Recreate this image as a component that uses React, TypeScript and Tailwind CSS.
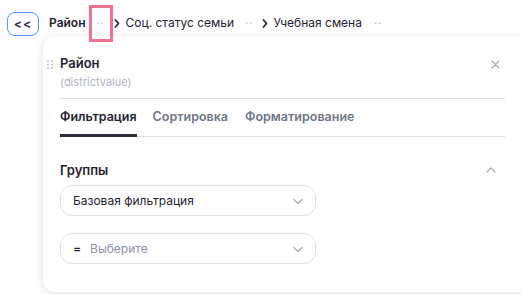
import React from "react";

const Dots = () => (
	<span className="text-[11px] leading-none tracking-[1px] text-[#b3b8c7]">··</span>
);

const Chevron = ({ up = false }: { up?: boolean }) => (
	<svg
		width="12"
		height="12"
		viewBox="0 0 12 12"
		fill="none"
		stroke="#a5abbb"
		strokeWidth="1.2"
		strokeLinecap="round"
		strokeLinejoin="round"
	>
		<path d={up ? "M2 8L6 4L10 8" : "M2 4.5L6 8.5L10 4.5"} />
	</svg>
);

const Arrow = () => (
	<svg width="6" height="9" viewBox="0 0 6 9" fill="none" stroke="#2a2e3a" strokeWidth="1.8" strokeLinecap="round" strokeLinejoin="round">
		<path d="M1.5 1L4.5 4.5L1.5 8" />
	</svg>
);

const App = () => {
	return (
		<div
			className="relative w-[521px] h-[294px] overflow-hidden bg-white text-[#1f2330]"
			style={{ fontFamily: "Inter, 'Noto Sans', sans-serif" }}
		>
			{/* Breadcrumbs */}
			<div className="relative z-10 flex items-center h-[46px] pl-[7px] text-[12px]">
				<button className="flex items-center justify-center w-[32px] h-[24px] mt-[1px] rounded-lg border border-[#5b90ee] text-[12px] font-bold tracking-[1px] text-[#2a2e3a]">
					&lt;&lt;
				</button>
				<span className="ml-[10px] font-semibold">Район</span>
				<span className="ml-[3px] flex items-center justify-center w-[24px] h-[37px] border-[3px] border-[#f0708f]">
					<Dots />
				</span>
				<span className="ml-[1px]">
					<Arrow />
				</span>
				<span className="ml-[6px]">Соц. статус семьи</span>
				<span className="ml-[11px]">
					<Dots />
				</span>
				<span className="ml-[9px]">
					<Arrow />
				</span>
				<span className="ml-[5px]">Учебная смена</span>
				<span className="ml-[12px]">
					<Dots />
				</span>
			</div>

			{/* Popover */}
			<div className="absolute left-[43px] top-[36px] w-[490px] h-[256px] rounded-xl bg-white shadow-[0_2px_10px_rgba(30,40,70,0.14)]">
				<div className="relative pl-[17px] pr-[16px] pt-[20px]">
					<svg className="absolute left-[4px] top-[24px]" width="6" height="9" viewBox="0 0 6 9" fill="#b3b8c7">
						<circle cx="1" cy="1" r="0.9" />
						<circle cx="5" cy="1" r="0.9" />
						<circle cx="1" cy="4.5" r="0.9" />
						<circle cx="5" cy="4.5" r="0.9" />
						<circle cx="1" cy="8" r="0.9" />
						<circle cx="5" cy="8" r="0.9" />
					</svg>
					<div className="flex items-center justify-between w-[440px] h-[16px]">
						<span className="text-[13px] font-semibold">Район</span>
						<svg width="9" height="9" viewBox="0 0 9 9" fill="none" stroke="#a5abbb" strokeWidth="1.2" strokeLinecap="round">
							<path d="M1 1L8 8M8 1L1 8" />
						</svg>
					</div>
					<div className="mt-[2px] text-[11px] text-[#b0b5c4]">(districtvalue)</div>
					<div className="mt-[7px] w-[445px] border-t border-[#dde0e8]" />

					{/* Tabs */}
					<div className="flex w-[445px] border-b border-[#dde0e8] text-[12.5px] font-semibold">
						<div className="pt-[9px] pb-[8px] border-b-[3px] border-[#2a2d36] -mb-[1px]">Фильтрация</div>
						<div className="pt-[9px] pb-[8px] ml-[16px] text-[#6e7689]">Сортировка</div>
						<div className="pt-[9px] pb-[8px] ml-[17px] text-[#6e7689]">Форматирование</div>
					</div>

					{/* Groups */}
					<div className="flex items-center justify-between w-[437px] mt-[25px] h-[16px]">
						<span className="text-[13px] font-semibold">Группы</span>
						<Chevron up />
					</div>

					<div className="mt-[7px] flex items-center justify-between w-[256px] h-[31px] pl-[12px] pr-[11px] rounded-xl border border-[#dcdfe8] text-[12px]">
						<span>Базовая фильтрация</span>
						<Chevron />
					</div>

					<div className="mt-[17px] flex items-center justify-between w-[256px] h-[31px] pl-[12px] pr-[11px] rounded-xl border border-[#dcdfe8] text-[12px]">
						<span className="flex items-center">
							<span className="font-semibold">=</span>
							<span className="ml-[9px] text-[#8a91a5]">Выберите</span>
						</span>
						<Chevron />
					</div>
				</div>
			</div>
		</div>
	);
};

export default App;
